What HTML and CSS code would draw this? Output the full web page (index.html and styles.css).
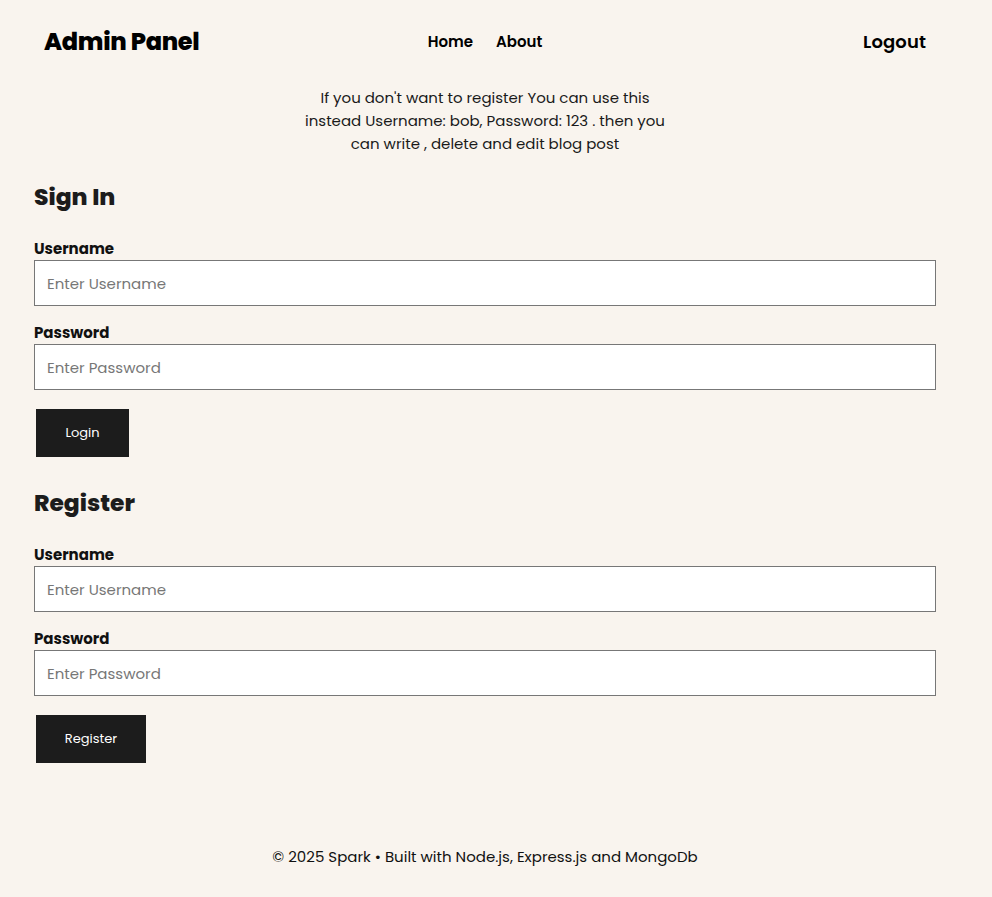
FILE: index.html
```html
<!DOCTYPE html>
<html lang="en">
<head>
<meta charset="utf-8">
<title>Admin Panel</title>
<link rel="stylesheet" href="styles.css">
</head>
<body>
<div class="site">
  <header class="header">
    <a class="logo" href="#">Admin Panel</a>
    <nav class="nav">
      <a href="#">Home</a>
      <a href="#">About</a>
    </nav>
    <a class="logout" href="#">Logout</a>
  </header>
  <main class="main">
    <p class="intro">If you don't want to register You can use this<br>instead Username: bob, Password: 123 . then you<br>can write , delete and edit blog post</p>

    <h2 class="title title-signin">Sign In</h2>
    <form class="form">
      <label class="label">Username</label>
      <input class="field" type="text" placeholder="Enter Username">
      <label class="label">Password</label>
      <input class="field" type="password" placeholder="Enter Password">
      <button class="btn btn-login" type="button">Login</button>
    </form>

    <h2 class="title title-register">Register</h2>
    <form class="form">
      <label class="label">Username</label>
      <input class="field" type="text" placeholder="Enter Username">
      <label class="label">Password</label>
      <input class="field" type="password" placeholder="Enter Password">
      <button class="btn btn-register" type="button">Register</button>
    </form>
  </main>
  <footer class="footer">© 2025 Spark • Built with Node.js, Express.js and MongoDb</footer>
</div>
</body>
</html>
```

FILE: styles.css
```css
* { box-sizing: border-box; }
html, body { margin: 0; padding: 0; }
body {
  background: #f9f4ee;
  color: #111;
  font-family: "Poppins", "Open Sans", sans-serif;
}
.site {
  width: 902px;
  margin-left: 34px;
}
.header {
  display: grid;
  grid-template-columns: 1fr auto 1fr;
  align-items: center;
  height: 82px;
  padding: 0 10px;
}
.header a { color: #000; text-decoration: none; }
.logo { font-size: 24px; font-weight: 800; letter-spacing: -0.3px; justify-self: start; }
.nav { display: flex; gap: 23px; }
.nav a { font-size: 15px; font-weight: 600; }
.logout { font-size: 18px; font-weight: 600; justify-self: end; letter-spacing: 0.1px; }
.intro {
  margin: 4px 0 0;
  text-align: center;
  font-size: 15px;
  line-height: 23px;
  color: #1a1a1a;
}
.title {
  margin: 0;
  font-size: 23.4px;
  font-weight: 800;
  color: #1c1c1c;
  line-height: 36px;
}
.title-signin { margin-top: 24px; }
.title-register { margin-top: 28px; }
.form { display: flex; flex-direction: column; align-items: flex-start; }
.label {
  font-size: 15px;
  font-weight: 700;
  line-height: 20px;
  margin-top: 17px;
  color: #111;
}
.form .label:first-child { margin-top: 24px; }
.field {
  width: 100%;
  height: 46px;
  border: 1px solid #777;
  background: #fff;
  padding: 0 12px;
  font-family: inherit;
  font-size: 15px;
  margin-top: 1px;
}
.field::placeholder { color: #777; }
.btn {
  margin: 19px 0 0 2px;
  height: 48px;
  background: #1c1c1c;
  color: #fff;
  border: none;
  font-family: inherit;
  font-size: 13px;
  padding: 0;
}
.btn-login { width: 93px; }
.btn-register { width: 110px; }
.footer {
  margin-top: 82px;
  text-align: center;
  font-size: 15px;
  color: #111;
}
```
